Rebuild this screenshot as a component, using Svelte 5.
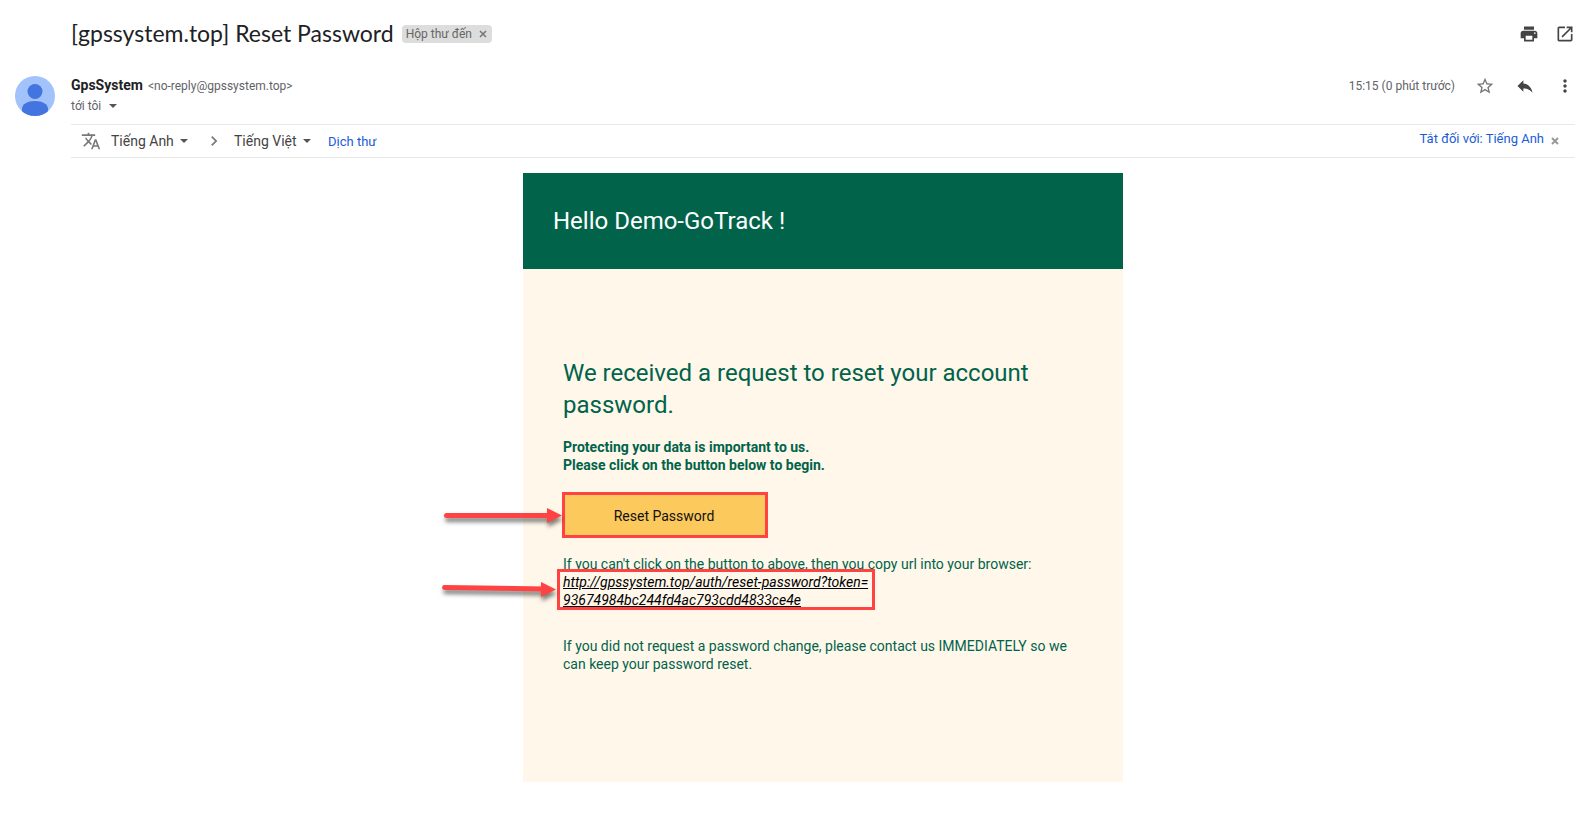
<script>
  const subject = '[gpssystem.top] Reset Password';
  const sender = { name: 'GpsSystem', email: '<no-reply@gpssystem.top>' };
  const resetUrl = ['http://gpssystem.top/auth/reset-password?token=', '93674984bc244fd4ac793cdd4833ce4e'];
  const icons = {
    print: 'M19 8H5c-1.66 0-3 1.34-3 3v6h4v4h12v-4h4v-6c0-1.66-1.34-3-3-3zm-3 11H8v-5h8v5zm3-7c-.55 0-1-.45-1-1s.45-1 1-1 1 .45 1 1-.45 1-1 1zm-1-9H6v4h12V3z',
    open: 'M19 19H5V5h7V3H5c-1.11 0-2 .9-2 2v14c0 1.1.89 2 2 2h14c1.1 0 2-.9 2-2v-7h-2v7zM14 3v2h3.59l-9.83 9.83 1.41 1.41L19 6.41V10h2V3h-7z',
    star: 'M22 9.24l-7.19-.62L12 2 9.19 8.63 2 9.24l5.46 4.73L5.82 21 12 17.27 18.18 21l-1.63-7.03L22 9.24zM12 15.4l-3.76 2.27 1-4.28-3.32-2.88 4.38-.38L12 6.1l1.71 4.04 4.38.38-3.32 2.88 1 4.28L12 15.4z',
    reply: 'M10 9V5l-7 7 7 7v-4.1c5 0 8.5 1.6 11 5.1-1-5-4-10-11-11z',
    more: 'M12 8c1.1 0 2-.9 2-2s-.9-2-2-2-2 .9-2 2 .9 2 2 2zm0 2c-1.1 0-2 .9-2 2s.9 2 2 2 2-.9 2-2-.9-2-2-2zm0 6c-1.1 0-2 .9-2 2s.9 2 2 2 2-.9 2-2-.9-2-2-2z',
    translate: 'M12.87 15.07l-2.54-2.51.03-.03c1.74-1.94 2.98-4.17 3.71-6.53H17V4h-7V2H8v2H1v1.99h11.17C11.5 7.92 10.44 9.75 9 11.35 8.07 10.32 7.3 9.19 6.69 8h-2c.73 1.63 1.73 3.17 2.98 4.56l-5.09 5.02L4 19l5-5 3.11 3.11.76-2.04zM18.5 10h-2L12 22h2l1.12-3h4.75L21 22h2l-4.5-12zm-2.62 7l1.62-4.33L19.12 17h-3.24z',
    chevron: 'M10 6L8.59 7.41 13.17 12l-4.58 4.59L10 18l6-6z'
  };
</script>

{#snippet icon(name)}
  <svg class="icon" viewBox="0 0 24 24" aria-hidden="true"><path d={icons[name]} /></svg>
{/snippet}

{#snippet caret()}
  <svg class="caret" viewBox="0 0 8 4" aria-hidden="true"><path d="M0 0h8L4 4z" /></svg>
{/snippet}

{#snippet cross()}
  <svg class="cross" viewBox="0 0 8 8" aria-hidden="true"><path d="M1 1l6 6M7 1L1 7" /></svg>
{/snippet}

<main class="mail">
  <header class="subject-row">
    <h1>{subject}</h1>
    <span class="tag">Hộp thư đến <button aria-label="Xóa nhãn">{@render cross()}</button></span>
    <div class="actions">
      <button aria-label="In tất cả">{@render icon('print')}</button>
      <button aria-label="Mở trong cửa sổ mới">{@render icon('open')}</button>
    </div>
  </header>

  <section class="message">
    <svg class="avatar" viewBox="0 0 40 40" aria-hidden="true">
      <clipPath id="disc"><circle cx="20" cy="20" r="20" /></clipPath>
      <g clip-path="url(#disc)">
        <rect width="40" height="40" fill="#a1c2fa" />
        <circle cx="20" cy="15.5" r="7.5" fill="#4374e0" />
        <path d="M7 40v-7c0-5 5.500-8 13-8s13 3 13 8v7z" fill="#4374e0" />
      </g>
    </svg>
    <div class="content">
      <div class="sender-row">
        <div class="who">
          <div class="from"><strong>{sender.name}</strong><span>{sender.email}</span></div>
          <button class="to">tới tôi {@render caret()}</button>
        </div>
        <div class="meta">
          <time>15:15 (0 phút trước)</time>
          <button class="soft" aria-label="Gắn dấu sao">{@render icon('star')}</button>
          <button aria-label="Trả lời">{@render icon('reply')}</button>
          <button aria-label="Thêm">{@render icon('more')}</button>
        </div>
      </div>

      <div class="translate-bar">
        <span class="soft">{@render icon('translate')}</span>
        <label class="language">
          <select aria-label="Ngôn ngữ nguồn"><option>Tiếng Anh</option></select>{@render caret()}
        </label>
        <span class="soft next">{@render icon('chevron')}</span>
        <label class="language">
          <select aria-label="Ngôn ngữ đích"><option>Tiếng Việt</option></select>{@render caret()}
        </label>
        <a class="do-translate" href="#translate">Dịch thư</a>
        <div class="turn-off">
          <a href="#off">Tắt đối với: Tiếng Anh</a>
          <button aria-label="Đóng">{@render cross()}</button>
        </div>
      </div>

      <article class="card">
        <div class="hello">Hello Demo-GoTrack !</div>
        <div class="body">
          <h2>We received a request to reset your account password.</h2>
          <p class="lead">Protecting your data is important to us.<br />Please click on the button below to begin.</p>
          <div class="callout">
            <button class="reset">Reset Password</button>
            <svg class="arrow" viewBox="0 0 120 30" aria-hidden="true">
              <path class="shaft" d="M4.500 14.500H108" /><path class="head" d="M105 7L120 14.500l-15 7.500z" />
            </svg>
          </div>
          <p>If you can't click on the button to above, then you copy url into your browser:</p>
          <div class="callout">
            <a class="url" href={resetUrl.join('')}>{resetUrl[0]}<br />{resetUrl[1]}</a>
            <span class="frame">
              <svg class="arrow" viewBox="0 0 120 30" aria-hidden="true">
                <path class="shaft" d="M8.500 12.500L108 14" /><path class="head" d="M105 7L120 14.500l-15 7.500z" />
              </svg>
            </span>
          </div>
          <p class="note">If you did not request a password change, please contact us IMMEDIATELY so we can keep your password reset.</p>
        </div>
      </article>
    </div>
  </section>
</main>

<style>
  :global(body) {
    margin: 0;
    background: #fff;
  }
  .mail {
    font-family: Roboto, "Liberation Sans", sans-serif;
    font-size: 14px;
    line-height: 18px;
    color: #222;
    padding: 20px 14px 0 15px;
  }
  button {
    font: inherit;
    color: inherit;
    background: none;
    border: 0;
    padding: 0;
    cursor: pointer;
  }
  a {
    color: #1a5cd8;
    text-decoration: none;
  }
  .icon {
    display: block;
    width: 20px;
    height: 20px;
    fill: #444;
  }
  .soft .icon {
    fill: #777;
  }
  .caret {
    width: 8px;
    height: 4px;
    fill: #555;
  }
  .cross {
    display: block;
    width: 8px;
    height: 8px;
    fill: none;
    stroke: #777;
    stroke-width: 1.6;
  }
  .subject-row {
    display: flex;
    align-items: center;
    height: 28px;
    padding-left: 56px;
  }
  h1 {
    margin: 0 8px 0 0;
    padding-bottom: 2px;
    font: 400 23px/26px Lato, Roboto, sans-serif;
    color: #202124;
  }
  .tag {
    display: flex;
    align-items: center;
    gap: 7px;
    padding: 0 5px 0 4px;
    border-radius: 4px;
    background: #ddd;
    color: #666;
    font-size: 12px;
  }
  .actions {
    display: flex;
    gap: 16px;
    margin-left: auto;
  }
  .message {
    display: flex;
    gap: 16px;
    margin-top: 28px;
  }
  .avatar {
    flex: none;
    width: 40px;
    height: 40px;
  }
  .content {
    flex: 1;
    min-width: 0;
  }
  .sender-row {
    display: flex;
    justify-content: space-between;
    align-items: flex-start;
    height: 48px;
  }
  .who {
    display: flex;
    flex-direction: column;
    align-items: flex-start;
    gap: 2px;
  }
  .from {
    display: flex;
    align-items: baseline;
    gap: 5px;
  }
  .from strong {
    font-weight: 700;
    color: #202124;
  }
  .from span,
  .to,
  time {
    font-size: 12px;
    color: #5f6368;
  }
  .to {
    display: flex;
    align-items: center;
    gap: 8px;
    line-height: 18px;
  }
  .meta {
    display: flex;
    align-items: center;
    gap: 20px;
  }
  .translate-bar {
    display: flex;
    align-items: center;
    height: 32px;
    padding: 0 16px 0 10px;
    border: solid #e8e8e8;
    border-width: 1px 0;
    color: #444;
  }
  .language {
    display: flex;
    align-items: center;
    gap: 6px;
    margin-left: 10px;
  }
  select {
    appearance: none;
    border: 0;
    padding: 0;
    background: none;
    color: inherit;
    font: inherit;
  }
  .next {
    margin-left: 16px;
  }
  .do-translate {
    margin: 1px 0 0 17px;
    font-size: 13px;
  }
  .turn-off {
    display: flex;
    align-items: flex-start;
    gap: 7px;
    margin: 0 0 5px auto;
    font-size: 13px;
  }
  .turn-off .cross {
    margin-top: 7px;
    stroke: #999;
    stroke-width: 2;
  }
  .card {
    max-width: 600px;
    margin: 15px auto 0;
    background: #fff7ea;
    color: #00634a;
  }
  .hello {
    padding: 32px 30px;
    background: #00634a;
    color: #fff;
    font-size: 24px;
    line-height: 32px;
  }
  .body {
    padding: 88px 40px 109px;
  }
  h2 {
    margin: 0;
    font-size: 24px;
    font-weight: 400;
    line-height: 32px;
  }
  p {
    margin: 0;
  }
  .lead {
    margin: 17px 0 18px;
    font-weight: 700;
  }
  .callout {
    position: relative;
    width: fit-content;
  }
  .reset {
    display: block;
    width: 206px;
    height: 46px;
    margin: 0 0 17px -1px;
    padding: 2px 2px 0 0;
    border: 3px solid #ff4343;
    background: #fcc95c;
    color: #111;
  }
  .url {
    color: #000;
    font-style: italic;
    text-decoration: underline;
  }
  .frame {
    position: absolute;
    inset: -4px -7px -1px -6px;
    border: 3px solid #ff4343;
    pointer-events: none;
  }
  .arrow {
    position: absolute;
    top: 9px;
    right: 100%;
    width: 120px;
    height: 30px;
    margin-right: 1px;
    overflow: visible;
    filter: drop-shadow(1px 4px 2px rgb(0 0 0 / 50%));
  }
  .frame .arrow {
    top: 3px;
    margin-right: 4px;
  }
  .shaft {
    fill: none;
    stroke: #ff4343;
    stroke-width: 5;
    stroke-linecap: round;
  }
  .head {
    fill: #ff4343;
  }
  .note {
    margin-top: 28px;
  }
</style>
